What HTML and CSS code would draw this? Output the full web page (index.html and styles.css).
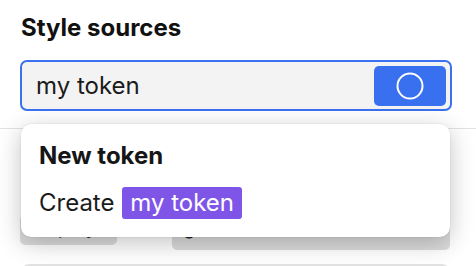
FILE: index.html
```html
<!DOCTYPE html>
<html lang="en">
<head>
    <meta charset="UTF-8">
    <title>Style sources</title>
    <link rel="stylesheet" href="styles.css">
</head>
<body>

    <div class="panel">
        <div class="panel-head">
            <h3 class="panel-title">Style sources</h3>
            <div class="token-input">
                <span class="token-value">my token</span>
                <button class="token-btn">
                    <svg width="30" height="30" viewBox="0 0 30 30">
                        <circle cx="15" cy="15" r="12.5" fill="none" stroke="#fff" stroke-width="2"/>
                    </svg>
                </button>
            </div>
        </div>

        <div class="panel-body">
            <div class="chip-row">
                <span class="chip">Display</span>
                <span class="chip chip-wide">get</span>
            </div>
            <div class="field"></div>

            <div class="menu">
                <div class="menu-label">New token</div>
                <div class="menu-item">Create <span class="menu-tag">my token</span></div>
            </div>
        </div>
    </div>

</body>
</html>
```

FILE: styles.css
```css
body {
    margin: 0;
    padding: 0;
    background: #fff;
    font-family: Inter, 'Noto Sans', sans-serif;
    color: #111;
}

.panel {
    width: 476px;
    height: 266px;
    overflow: hidden;
}

.panel-head {
    padding: 13px 24px 17px 20px;
    border-bottom: 1px solid #e2e2e2;
}

.panel-title {
    margin: 0 0 18px 1px;
    font-size: 24px;
    font-weight: 700;
    line-height: 29px;
}

.token-input {
    display: flex;
    align-items: center;
    justify-content: space-between;
    height: 47px;
    padding: 0 4px 0 14px;
    background: #f3f3f3;
    border: 2px solid #3b70ef;
    border-radius: 7px;
}

.token-value {
    font-size: 24px;
    line-height: 29px;
    color: #1b1b1b;
}

.token-btn {
    display: flex;
    align-items: center;
    justify-content: center;
    width: 72px;
    height: 40px;
    padding: 0;
    border: none;
    border-radius: 5px;
    background: #3870f0;
}

.panel-body {
    position: relative;
    padding: 0 26px 0 20px;
}

.chip-row {
    display: flex;
    align-items: flex-start;
    gap: 55px;
    padding-top: 86px;
}

.chip {
    display: inline-block;
    width: 97px;
    height: 30px;
    line-height: 24px;
    background: #dcdcdc;
    border-radius: 5px;
    color: #222;
    font-size: 20px;
    text-indent: 8px;
}

.chip-wide {
    flex: 1;
    height: 35px;
    text-indent: 11px;
}

.field {
    margin: 14px 0 0 1px;
    height: 30px;
    border: 2px solid #e2e2e2;
    border-radius: 8px;
}

.menu {
    position: absolute;
    top: -5px;
    left: 21px;
    width: 429px;
    box-sizing: border-box;
    padding: 17px 18px 18px;
    background: #fff;
    border-radius: 10px;
    box-shadow: 0 6px 24px rgba(0, 0, 0, 0.24), 0 0 2px rgba(0, 0, 0, 0.12);
}

.menu-label {
    font-size: 24px;
    font-weight: 700;
    color: #161616;
    line-height: 29px;
}

.menu-item {
    margin-top: 17px;
    font-size: 24px;
    color: #1b1b1b;
    line-height: 32px;
}

.menu-tag {
    display: inline-block;
    padding: 0 8px;
    margin-left: 1px;
    background: #7f55e8;
    color: #fff;
    border-radius: 3px;
}
```
